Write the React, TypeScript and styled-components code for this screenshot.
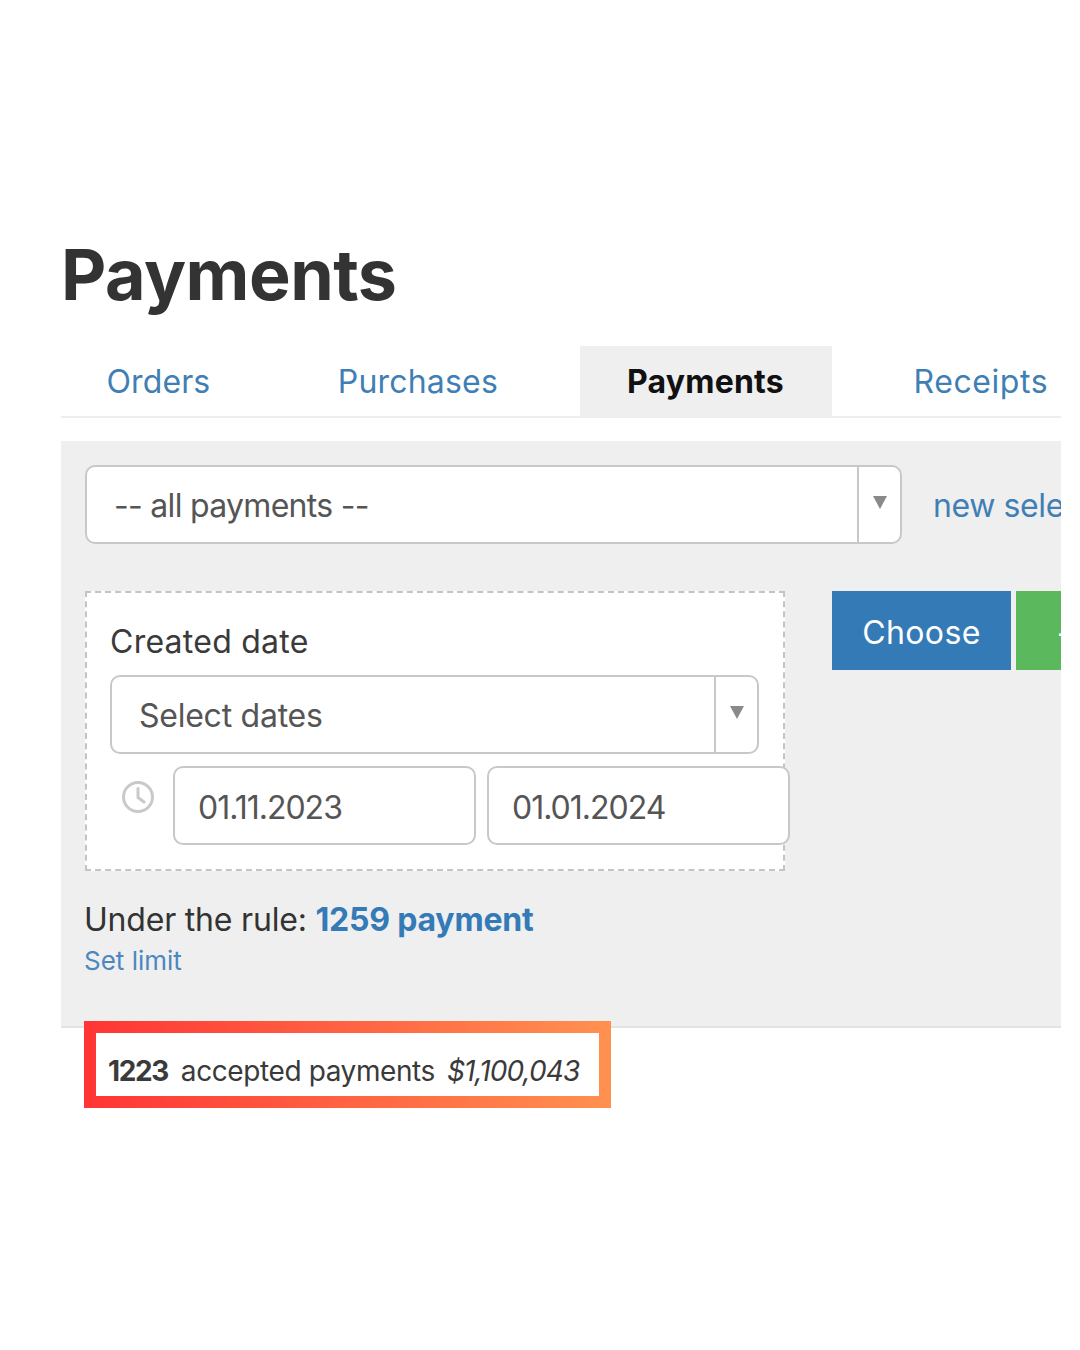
import React from "react";
import styled, { createGlobalStyle } from "styled-components";

const Global = createGlobalStyle`
  html, body { margin: 0; padding: 0; background: #fff; }
  body { font-family: Inter, "Liberation Sans", sans-serif; color: #333; }
`;

const Page = styled.div`
  width: 1000px;
  height: 1350px;
  margin-left: 61px;
  padding-top: 232px;
  box-sizing: border-box;
  overflow: hidden;
`;

const Title = styled.h1`
  margin: 0;
  height: 114px;
  font-size: 70px;
  line-height: 85px;
  font-weight: 700;
  letter-spacing: -0.5px;
  color: #333;
`;

const Tabs = styled.nav`
  display: flex;
  gap: 36px;
  height: 72px;
  box-sizing: border-box;
  border-bottom: 2px solid #eee;
`;

const Tab = styled.a<{ $active?: boolean; $tracking?: number }>`
  display: flex;
  align-items: center;
  height: 71px;
  padding: 0 ${(p) => (p.$active ? 48 : 46)}px 0 ${(p) => (p.$active ? 47 : 45.5)}px;
  box-sizing: border-box;
  font-size: 32px;
  letter-spacing: ${(p) => p.$tracking ?? 0.1}px;
  font-weight: ${(p) => (p.$active ? 700 : 400)};
  color: ${(p) => (p.$active ? "#111" : "#3f7fb5")};
  background: ${(p) => (p.$active ? "#efefef" : "transparent")};
`;

const Panel = styled.section`
  margin-top: 23px;
  height: 587px;
  box-sizing: border-box;
  padding: 24px 24px 0;
  background: #efefef;
  border-bottom: 2px solid #e3e3e3;
`;

const TopRow = styled.div`
  display: flex;
  align-items: center;
  gap: 31px;
  white-space: nowrap;
`;

const SelectBox = styled.div<{ $width: number; $tracking: number }>`
  display: flex;
  width: ${(p) => p.$width}px;
  height: 79px;
  flex: none;
  box-sizing: border-box;
  background: #fff;
  border: 2px solid #c8c8c8;
  border-radius: 10px;
  font-size: 32px;
  letter-spacing: ${(p) => p.$tracking}px;
  color: #555;
`;

const SelectText = styled.div`
  flex: 1;
  display: flex;
  align-items: center;
  padding: 1px 0 0 27px;
`;

const Caret = styled.div`
  width: 43px;
  flex: none;
  display: flex;
  justify-content: center;
  padding-top: 29px;
  box-sizing: border-box;
  border-left: 2px solid #c8c8c8;
  &::before {
    content: "";
    width: 0;
    height: 0;
    border-left: 7px solid transparent;
    border-right: 7px solid transparent;
    border-top: 13px solid #8a8a8a;
  }
`;

const TextLink = styled.a`
  display: block;
  padding-top: 2px;
  font-size: 32px;
  letter-spacing: -0.4px;
  color: #3f7fb5;
`;

const FilterRow = styled.div`
  display: flex;
  gap: 47px;
  margin-top: 47px;
  white-space: nowrap;
`;

const DateBox = styled.div`
  width: 700px;
  height: 280px;
  flex: none;
  box-sizing: border-box;
  padding: 24px 23px 0;
  background: #fff;
  border: 2px dashed #c4c4c4;
`;

const FieldLabel = styled.div`
  height: 58px;
  font-size: 32px;
  line-height: 50px;
  letter-spacing: 0.25px;
  color: #3a3a3a;
`;

const DateRow = styled.div`
  display: flex;
  margin-top: 12px;
  gap: 11px;
`;

const ClockSlot = styled.div`
  width: 52px;
  flex: none;
  padding: 14px 0 0 11px;
  box-sizing: border-box;
`;

const DateInput = styled.div`
  width: 303px;
  height: 79px;
  flex: none;
  display: flex;
  align-items: center;
  box-sizing: border-box;
  padding: 4px 0 0 23px;
  background: #fff;
  border: 2px solid #c8c8c8;
  border-radius: 10px;
  font-size: 32px;
  letter-spacing: -1px;
  color: #555;
`;

const Buttons = styled.div`
  display: flex;
  gap: 5px;
`;

const ActionButton = styled.button<{ $color: string; $width: number }>`
  width: ${(p) => p.$width}px;
  height: 79px;
  flex: none;
  border: 0;
  padding: 4px 0 0;
  background: ${(p) => p.$color};
  color: #fff;
  font-family: inherit;
  font-size: 32px;
  letter-spacing: 0.4px;
`;

const AddButton = styled(ActionButton)`
  text-align: left;
  padding-left: 40px;
`;

const RuleLine = styled.div`
  margin: 25px 0 0 -1px;
  font-size: 32px;
  line-height: 48px;
  letter-spacing: -0.2px;
  color: #333;
`;

const RuleCount = styled.a`
  font-weight: 700;
  color: #337ab7;
`;

const LimitLink = styled.a`
  display: block;
  margin: -1px 0 0 -1px;
  font-size: 26px;
  line-height: 36px;
  letter-spacing: 0;
  color: #4a88c0;
`;

const Summary = styled.div`
  position: relative;
  margin: -7px 0 0 23px;
  width: 527px;
  height: 87px;
  box-sizing: border-box;
  padding: 12px;
  background: linear-gradient(90deg, #ff3535 0%, #ff9150 100%);
`;

const SummaryInner = styled.div`
  display: flex;
  align-items: center;
  height: 100%;
  padding: 12px 0 0 12px;
  box-sizing: border-box;
  background: #fff;
  font-size: 28px;
  letter-spacing: -0.4px;
  white-space: nowrap;
  color: #3a3a3a;
`;

const SummaryCount = styled.b`
  font-weight: 700;
  letter-spacing: -1.4px;
  margin-right: 13px;
`;

const SummaryAmount = styled.i`
  letter-spacing: -0.9px;
  margin-left: 12px;
`;

const ClockIcon = () => (
  <svg width="34" height="34" viewBox="0 0 34 34" fill="none" stroke="#c9c9c9" strokeWidth="3" strokeLinecap="round">
    <circle cx="17" cy="17" r="14.5" />
    <path d="M17 8.5V17.5L23 22" />
  </svg>
);

export default function App() {
  return (
    <>
      <Global />
      <Page>
        <Title>Payments</Title>
        <Tabs>
          <Tab>Orders</Tab>
          <Tab $tracking={0.2}>Purchases</Tab>
          <Tab $active $tracking={0.2}>Payments</Tab>
          <Tab $tracking={0.6}>Receipts</Tab>
        </Tabs>
        <Panel>
          <TopRow>
            <SelectBox $width={817} $tracking={-0.7}>
              <SelectText>-- all payments --</SelectText>
              <Caret />
            </SelectBox>
            <TextLink>new selection</TextLink>
          </TopRow>
          <FilterRow>
            <DateBox>
              <FieldLabel>Created date</FieldLabel>
              <SelectBox $width={649} $tracking={-0.25}>
                <SelectText>Select dates</SelectText>
                <Caret />
              </SelectBox>
              <DateRow>
                <ClockSlot>
                  <ClockIcon />
                </ClockSlot>
                <DateInput>01.11.2023</DateInput>
                <DateInput>01.01.2024</DateInput>
              </DateRow>
            </DateBox>
            <Buttons>
              <ActionButton $color="#337ab7" $width={179}>Choose</ActionButton>
              <AddButton $color="#5cb85c" $width={120}>+ Add</AddButton>
            </Buttons>
          </FilterRow>
          <RuleLine>
            Under the rule: <RuleCount>1259 payment</RuleCount>
          </RuleLine>
          <LimitLink>Set limit</LimitLink>
        </Panel>
        <Summary>
          <SummaryInner>
            <SummaryCount>1223</SummaryCount>
            accepted payments
            <SummaryAmount>$1,100,043</SummaryAmount>
          </SummaryInner>
        </Summary>
      </Page>
    </>
  );
}
